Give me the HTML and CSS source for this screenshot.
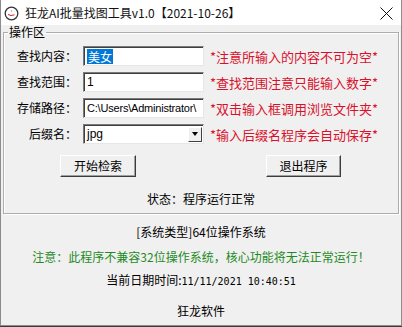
FILE: index.html
```html
<!DOCTYPE html>
<html lang="zh-CN">
<head>
    <meta charset="UTF-8">
    <title>狂龙AI批量找图工具v1.0【2021-10-26】</title>
    <link rel="stylesheet" href="styles.css">
</head>
<body>
    <div class="window">
        <div class="titlebar">
            <svg class="app-icon" width="15" height="15" viewBox="0 0 15 15">
                <circle cx="7.5" cy="7.5" r="6.3" fill="#fff" stroke="#333" stroke-width="1.3"/>
                <path d="M4 8.5 L7 9.5 L10.5 8.8" fill="none" stroke="#d02030" stroke-width="1"/>
                <circle cx="7.5" cy="5" r="0.7" fill="#999"/>
            </svg>
            <span class="title">狂龙AI批量找图工具v1.0【2021-10-26】</span>
            <svg class="close" width="13" height="13" viewBox="0 0 13 13">
                <path d="M0.5 0.5 L12.5 12.5 M12.5 0.5 L0.5 12.5" stroke="#111" stroke-width="1"/>
            </svg>
        </div>

        <fieldset class="group">
            <legend>操作区</legend>

            <div class="form-grid">
                <label>查找内容：</label>
                <div class="field"><span class="selected">美女</span></div>
                <span class="note">*注意所输入的内容不可为空*</span>

                <label>查找范围：</label>
                <div class="field">1</div>
                <span class="note">*查找范围注意只能输入数字*</span>

                <label>存储路径：</label>
                <div class="field path"><span>C:\Users\Administrator\</span></div>
                <span class="note">*双击输入框调用浏览文件夹*</span>

                <label>后缀名：</label>
                <div class="field combo">
                    <span>jpg</span>
                    <span class="drop"><i class="arrow"></i></span>
                </div>
                <span class="note">*输入后缀名程序会自动保存*</span>
            </div>

            <div class="buttons">
                <button class="btn btn-start">开始检索</button>
                <button class="btn btn-exit">退出程序</button>
            </div>

            <div class="status">状态：程序运行正常</div>
        </fieldset>

        <div class="info sys">[系统类型]64位操作系统</div>
        <div class="info warn">注意：此程序不兼容32位操作系统，核心功能将无法正常运行！</div>
        <div class="info clock">当前日期时间:<span class="mono">11/11/2021 10:40:51</span></div>
        <div class="info brand">狂龙软件</div>
    </div>
</body>
</html>
```

FILE: styles.css
```css
body {
    margin: 0;
    background: #3c3c3c;
    font-family: "Noto Sans CJK SC", "Noto Sans", sans-serif;
    font-size: 12px;
    color: #000;
}

.window {
    width: 402px;
    height: 326px;
    box-sizing: border-box;
    background: #f0f0f0;
    border: 1px solid #8c8c8c;
    border-top: none;
    overflow: hidden;
}

.titlebar {
    height: 25px;
    background: #fff;
    display: flex;
    align-items: center;
    padding-left: 3px;
}

.app-icon {
    margin-top: 1px;
}

.title {
    margin-left: 6px;
    font-size: 12px;
    line-height: 14px;
    color: #111;
}

.close {
    margin-left: auto;
    margin-right: 8px;
    margin-top: 2px;
}

.group {
    margin: 0 2px;
    padding: 7px 0 7px 0;
    border: 1px solid #adadad;
    box-shadow: inset 1px 1px 0 #fff, 1px 1px 0 #fff;
    min-width: 0;
}

.group legend {
    margin-left: 4px;
    padding: 0 1px;
    line-height: 14px;
    font-size: 12px;
}

.form-grid {
    display: grid;
    grid-template-columns: 73px 121px auto;
    grid-auto-rows: 20px;
    column-gap: 6px;
    row-gap: 6px;
    align-items: center;
}

.form-grid label {
    text-align: right;
    line-height: 14px;
}

.field {
    height: 20px;
    min-width: 0;
    box-sizing: border-box;
    background: #fff;
    border: 1px solid;
    border-color: #7a7a7a #e6e6e6 #e6e6e6 #7a7a7a;
    box-shadow: inset 1px 1px 0 #3f3f3f;
    padding: 0 2px 0 3px;
    font-family: "Liberation Sans", "Noto Sans CJK SC", sans-serif;
    font-size: 12px;
    line-height: 18px;
    white-space: nowrap;
    overflow: hidden;
    display: flex;
    align-items: center;
}

.path {
    font-size: 11px;
    letter-spacing: -0.2px;
}

.selected {
    background: #0078d7;
    color: #fff;
    font-family: "Noto Sans CJK SC", sans-serif;
    line-height: 15px;
    padding: 0 1px;
}

.combo {
    justify-content: space-between;
    padding-right: 1px;
}

.drop {
    width: 14px;
    height: 15px;
    box-sizing: border-box;
    background: #f0f0f0;
    border: 1px solid;
    border-color: #fff #404040 #404040 #fff;
    display: flex;
    align-items: center;
    justify-content: center;
}

.arrow {
    width: 0;
    height: 0;
    border-left: 3.5px solid transparent;
    border-right: 3.5px solid transparent;
    border-top: 4px solid #000;
}

.note {
    color: #d8102c;
    font-size: 13px;
    line-height: 15px;
    white-space: nowrap;
}

.buttons {
    display: flex;
    margin-top: 11px;
    padding-left: 56px;
}

.btn {
    height: 22px;
    box-sizing: border-box;
    background: #f0f0f0;
    border: 1px solid;
    border-color: #fff #3c3c3c #3c3c3c #fff;
    box-shadow: inset -1px -1px 0 #a0a0a0;
    font-family: "Noto Sans CJK SC", sans-serif;
    font-size: 12px;
    line-height: 14px;
    padding: 0;
    color: #000;
}

.btn-start {
    width: 76px;
}

.btn-exit {
    width: 75px;
    margin-left: 130px;
}

.status {
    margin-top: 15px;
    text-align: center;
    line-height: 14px;
}

.info {
    text-align: center;
    line-height: 14px;
}

.sys {
    margin-top: 11px;
}

.warn {
    margin-top: 11px;
    color: #1f8a1f;
}

.clock {
    margin-top: 9px;
}

.mono {
    font-family: "DejaVu Sans Mono", "Liberation Mono", monospace;
    font-size: 10px;
}

.brand {
    margin-top: 15px;
}
```
